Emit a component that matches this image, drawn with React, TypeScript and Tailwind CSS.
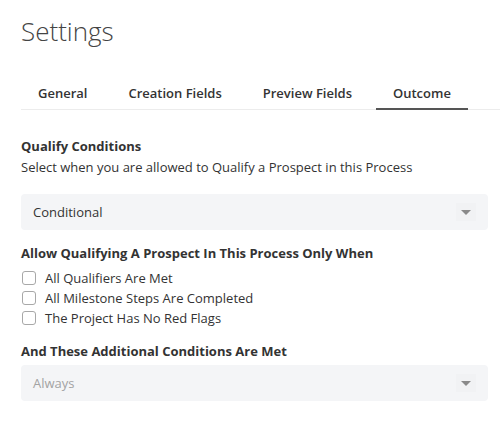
import React from "react";

const font = { fontFamily: '"Open Sans", "Liberation Sans", sans-serif' };

function Select({ value, placeholder }: { value: string; placeholder?: boolean }) {
  return (
    <div className="flex h-[36px] items-center justify-between rounded-[4px] bg-[#f4f5f7] pl-[12px] pr-[12px]">
      <span className={`text-[13px] leading-[20px] ${placeholder ? "text-[#a3a3a3]" : "text-[#333]"}`}>{value}</span>
      <span className="flex h-[18px] w-[20px] items-center justify-center bg-[#f1f2f4]">
        <svg width="10" height="5" viewBox="0 0 10 5">
          <path d="M0 0 L10 0 L5 5 Z" fill="#8a8a8a" />
        </svg>
      </span>
    </div>
  );
}

function Check({ label }: { label: string }) {
  return (
    <div className="flex h-[20px] items-center">
      <span className="ml-[1px] mr-[9px] h-[14px] w-[14px] rounded-[3px] border border-[#a8a8a8] bg-white" />
      <span className="text-[13px] leading-[20px] text-[#333]">{label}</span>
    </div>
  );
}

export default function App() {
  const tabs = ["General", "Creation Fields", "Preview Fields", "Outcome"];
  return (
    <div className="h-[422px] w-[500px] overflow-hidden bg-white pl-[21px]" style={font}>
      <div className="pt-[13px] text-[26px] font-light leading-[36px] text-[#444]">Settings</div>
      <div className="mt-[34px] flex gap-[7px] border-b border-[#ececec]">
        {tabs.map((t) => (
          <div
            key={t}
            className={`px-[17px] pb-[5px] text-[13px] font-semibold leading-[20px] text-[#333] ${
              t === "Outcome" ? "mb-[-1px] border-b-2 border-[#555]" : "mb-[-1px] border-b-2 border-transparent"
            }`}
          >
            {t}
          </div>
        ))}
      </div>
      <div className="pr-[12px]">
        <div className="mt-[26px] text-[13px] font-bold leading-[21px] text-[#333]">Qualify Conditions</div>
        <div className="text-[13px] leading-[21px] text-[#333]">
          Select when you are allowed to Qualify a Prospect in this Process
        </div>
        <div className="mt-[16px]">
          <Select value="Conditional" />
        </div>
        <div className="mt-[13px] text-[13px] font-bold leading-[21px] text-[#333]">
          Allow Qualifying A Prospect In This Process Only When
        </div>
        <div className="mt-[4px] flex flex-col">
          <Check label="All Qualifiers Are Met" />
          <Check label="All Milestone Steps Are Completed" />
          <Check label="The Project Has No Red Flags" />
        </div>
        <div className="mt-[13px] text-[13px] font-bold leading-[21px] text-[#333]">
          And These Additional Conditions Are Met
        </div>
        <div className="mt-[3px]">
          <Select value="Always" placeholder />
        </div>
      </div>
    </div>
  );
}
